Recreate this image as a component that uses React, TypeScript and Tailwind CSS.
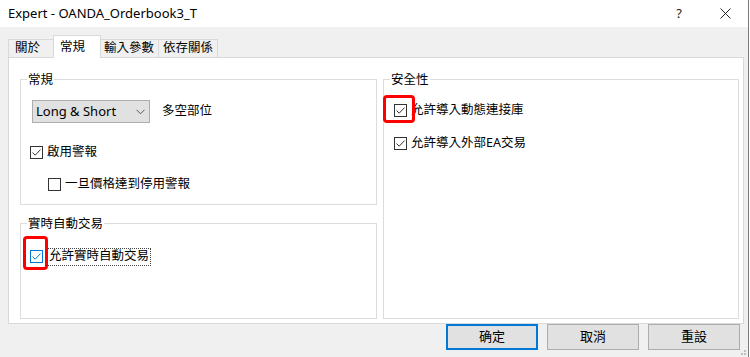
import React from "react";

const Check = ({ blue = false }: { blue?: boolean }) => (
  <span
    className={`w-[13px] h-[13px] shrink-0 border bg-white flex items-center justify-center ${
      blue ? "border-[#0078d7]" : "border-[#333333]"
    }`}
  >
    <svg width="11" height="11" viewBox="0 0 11 11">
      <path
        d="M1.5 5.5 L4.2 8.2 L9.5 2.6"
        fill="none"
        stroke={blue ? "#0078d7" : "#333333"}
        strokeWidth="1"
      />
    </svg>
  </span>
);

const Box = () => <span className="w-[13px] h-[13px] shrink-0 border border-[#333333] bg-white" />;

const Group = ({ label, className, children }: { label: string; className: string; children?: React.ReactNode }) => (
  <div className={`relative border border-[#dcdcdc] ${className}`}>
    <span className="absolute -top-[9px] left-[6px] bg-white px-[1px] leading-[17px]">{label}</span>
    {children}
  </div>
);

export default function App() {
  return (
    <div className="w-[750px] h-[357px] flex bg-white text-[12.5px] text-black font-['Noto_Sans','Noto_Sans_CJK_TC',sans-serif] overflow-hidden">
      <div className="w-[748px] h-full flex flex-col bg-[#f0f0f0] relative">
        {/* title bar */}
        <div className="h-[27px] bg-white flex items-center">
          <span className="pl-[8px] text-[13px]">Expert - OANDA_Orderbook3_T</span>
          <div className="ml-auto flex h-full">
            <div className="w-[46px] h-full flex items-center justify-center text-[13px] text-[#222]">?</div>
            <div className="w-[46px] h-full flex items-center justify-center">
              <svg width="11" height="11" viewBox="0 0 11 11">
                <path d="M0.5 0.5 L10.5 10.5 M10.5 0.5 L0.5 10.5" stroke="#222" strokeWidth="1" />
              </svg>
            </div>
          </div>
        </div>

        {/* tabs */}
        <div className="h-[30px] flex items-end pl-[8px]">
          <div className="w-[45px] h-[18px] border-l border-t border-[#d9d9d9] flex items-center pl-[6px] leading-none">關於</div>
          <div className="w-[48px] h-[23px] -mb-px relative z-10 border-l border-t border-r border-[#d9d9d9] bg-white flex items-center pl-[6px] leading-none">
            常規
          </div>
          <div className="w-[58px] h-[18px] border-t border-r border-[#d9d9d9] flex items-center pl-[3px] leading-none">輸入參數</div>
          <div className="w-[59px] h-[18px] border-t border-r border-[#d9d9d9] flex items-center pl-[4px] leading-none">依存關係</div>
        </div>

        {/* panel */}
        <div className="ml-[8px] w-[736px] h-[267px] border border-[#d9d9d9] bg-white flex gap-[6px] pl-[11px] pt-[21px]">
          <div className="w-[357px] flex flex-col">
            <Group label="常規" className="h-[126px] pt-[20px]">
              <div className="flex items-center pl-[11px]">
                <div className="w-[118px] h-[23px] border border-[#adadad] bg-[#e1e1e1] flex items-center pl-[3px] pr-[4px]">
                  <span className="text-[13px]">Long &amp; Short</span>
                  <svg className="ml-auto" width="9" height="6" viewBox="0 0 9 6">
                    <path d="M0.5 0.8 L4.5 4.8 L8.5 0.8" fill="none" stroke="#555" strokeWidth="1" />
                  </svg>
                </div>
                <span className="ml-[12px]">多空部位</span>
              </div>
              <div className="mt-[21px] ml-[9px] h-[17px] flex items-center gap-[4px]">
                <Check />
                <span>啟用警報</span>
              </div>
              <div className="mt-[15px] ml-[27px] h-[17px] flex items-center gap-[4px]">
                <Box />
                <span>一旦價格達到停用警報</span>
              </div>
            </Group>
            <Group label="實時自動交易" className="mt-[18px] h-[96px] pt-[24px]">
              <div className="ml-[9px] h-[17px] flex items-center gap-[4px]">
                <Check blue />
                <span className="h-[18px] flex items-center border border-dotted border-[#444] px-px leading-none">允許實時自動交易</span>
              </div>
            </Group>
          </div>
          <Group label="安全性" className="w-[356px] h-[240px] pt-[22px]">
            <div className="ml-[10px] h-[17px] flex items-center gap-[4px]">
              <Check />
              <span>允許導入動態連接庫</span>
            </div>
            <div className="mt-[16px] ml-[10px] h-[17px] flex items-center gap-[4px]">
              <Check />
              <span>允許導入外部EA交易</span>
            </div>
          </Group>
        </div>

        {/* buttons */}
        <div className="flex justify-end gap-[9px] pr-[8px]">
          <button className="w-[92px] h-[26px] border-2 border-[#0078d7] bg-[#e1e1e1] flex items-center justify-center text-[13px]">确定</button>
          <button className="w-[92px] h-[26px] border border-[#adadad] bg-[#e1e1e1] flex items-center justify-center text-[13px]">取消</button>
          <button className="w-[92px] h-[26px] border border-[#adadad] bg-[#e1e1e1] flex items-center justify-center text-[13px]">重設</button>
        </div>

        {/* resize grip */}
        <svg className="absolute right-[1px] bottom-0" width="8" height="7" viewBox="0 0 8 7">
          <rect x="5" y="0" width="2" height="2" fill="#bdbdbd" />
          <rect x="2" y="3" width="2" height="2" fill="#bdbdbd" />
          <rect x="5" y="3" width="2" height="2" fill="#bdbdbd" />
        </svg>

        {/* red highlight marks */}
        <div className="absolute left-[23px] top-[236px] w-[25px] h-[34px] border-[3px] border-[#ff0000] rounded-[4px]" />
        <div className="absolute left-[383px] top-[95px] w-[32px] h-[28px] border-[3px] border-[#ff0000] rounded-[4px]" />
      </div>
      <div className="w-px h-full bg-[#7a7a7a]" />
      <div className="w-px h-full bg-white" />
    </div>
  );
}
